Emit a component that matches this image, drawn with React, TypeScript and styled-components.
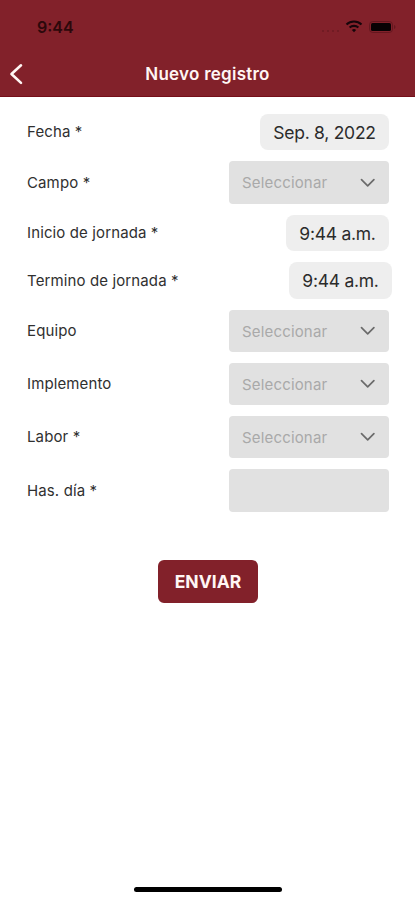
import React from "react";
import styled, { createGlobalStyle } from "styled-components";

const GlobalStyle = createGlobalStyle`
  * { box-sizing: border-box; }
  body { margin: 0; background: #fff; }
  button, input { font: inherit; letter-spacing: inherit; border: 0; padding: 0; margin: 0; outline: 0; }
`;

const Screen = styled.div`
  width: 415px;
  height: 900px;
  display: flex;
  flex-direction: column;
  align-items: center;
  background: #fff;
  color: #303030;
  font-family: Inter, "Liberation Sans", sans-serif;
  overflow: hidden;
`;

const Header = styled.header`
  width: 100%;
  height: 97px;
  flex: none;
  background: #82212a;
  border-bottom: 1px solid #750f19;
`;

const StatusBar = styled.div`
  height: 53px;
  padding: 1px 18px 0 37px;
  display: flex;
  align-items: center;
  justify-content: space-between;
`;

const Clock = styled.span`
  color: #2c080b;
  font-size: 16px;
  font-weight: 600;
`;

const TitleBar = styled.div`
  height: 42px;
  display: grid;
  grid-template-columns: 60px 1fr 60px;
  align-items: center;
`;

const BackButton = styled.button`
  display: flex;
  padding-left: 9px;
  background: none;
`;

const Title = styled.h1`
  margin: 0;
  color: #fff6f4;
  text-align: center;
  font-size: 17px;
  font-weight: 600;
  letter-spacing: 0.25px;
  white-space: nowrap;
`;

const Form = styled.form`
  width: 100%;
  padding: 17px 26px 0 27px;
  display: flex;
  flex-direction: column;
  gap: 11px;
`;

const Row = styled.div<{ $height: number; $shift?: number }>`
  height: ${(p) => p.$height}px;
  margin-right: ${(p) => -(p.$shift ?? 0)}px;
  display: flex;
  align-items: center;
  justify-content: space-between;
`;

const Label = styled.span`
  padding-bottom: 1px;
  font-size: 15px;
  letter-spacing: 0.12px;
  white-space: nowrap;
`;

const Pill = styled.button<{ $width: number }>`
  width: ${(p) => p.$width}px;
  height: 100%;
  border-radius: 8px;
  background: #eeeeee;
  color: #2b2b2b;
  font-size: 17.5px;
  letter-spacing: -0.26px;
  white-space: nowrap;
`;

const Select = styled.button`
  width: 160px;
  height: 100%;
  display: flex;
  align-items: center;
  justify-content: space-between;
  border-radius: 4px;
  background: #e1e1e1;
  color: #a9a9a9;
  font-size: 15px;
  letter-spacing: 0.17px;

  && {
    padding: 0 13px;
  }
`;

const TextField = styled.input`
  width: 160px;
  height: 100%;
  border-radius: 4px;
  background: #e1e1e1;
`;

const Submit = styled.button`
  width: 100px;
  height: 43px;
  align-self: center;
  border-radius: 6px;
  background: #82212a;
  color: #fff6f4;
  font-size: 17.5px;
  font-weight: 700;

  && {
    margin-top: 37px;
  }
`;

const HomeIndicator = styled.div`
  width: 148px;
  height: 5px;
  flex: none;
  margin: auto 0 8px;
  border-radius: 3px;
  background: #000;
`;

const StatusIcons = () => (
  <svg width="78" height="18" viewBox="0 0 78 18" fill="none">
    <g fill="#6b1a22">
      <circle cx="4" cy="13" r="1" />
      <circle cx="9" cy="13" r="1" />
      <circle cx="14" cy="13" r="1" />
      <circle cx="19" cy="13" r="1" />
    </g>
    <g stroke="#16050a" strokeWidth="2.1">
      <path d="M27.5 6.4a11 11 0 0 1 15 0" />
      <path d="M30.6 9.6a6.4 6.4 0 0 1 8.8 0" />
    </g>
    <path d="m35 14.3-2.1-2.2a3 3 0 0 1 4.2 0z" fill="#16050a" />
    <rect x="50.5" y="3.5" width="23" height="11" rx="3.3" stroke="#64171f" />
    <rect x="52" y="5" width="20" height="8" rx="1.6" fill="#080204" />
    <path d="M75 7v4c2-.7 2-3.3 0-4z" fill="#64171f" />
  </svg>
);

const BackIcon = () => (
  <svg width="15" height="22" viewBox="0 0 15 22" fill="none" stroke="#fff6f4" strokeWidth="2.6" strokeLinecap="round" strokeLinejoin="round">
    <path d="M12 2.3 2.5 11l9.5 8.9" />
  </svg>
);

const Chevron = () => (
  <svg width="16" height="10" viewBox="0 0 16 10" fill="none" stroke="#6b6b6b" strokeWidth="1.7" strokeLinecap="round" strokeLinejoin="round">
    <path d="m1.5 1.6 6.2 6.2 6.2-6.2" />
  </svg>
);

type Field = {
  label: string;
  kind: "pill" | "select" | "text";
  height: number;
  value?: string;
  width?: number;
  shift?: number;
};

const fields: Field[] = [
  { label: "Fecha *", kind: "pill", value: "Sep. 8, 2022", width: 129, height: 36 },
  { label: "Campo *", kind: "select", height: 43 },
  { label: "Inicio de jornada *", kind: "pill", value: "9:44 a.m.", width: 103, height: 36 },
  { label: "Termino de jornada *", kind: "pill", value: "9:44 a.m.", width: 103, height: 37, shift: 3 },
  { label: "Equipo", kind: "select", height: 42 },
  { label: "Implemento", kind: "select", height: 42 },
  { label: "Labor *", kind: "select", height: 42 },
  { label: "Has. día *", kind: "text", height: 43 },
];

const Control = ({ field }: { field: Field }) => {
  if (field.kind === "pill") {
    return <Pill type="button" $width={field.width ?? 103}>{field.value}</Pill>;
  }
  if (field.kind === "text") return <TextField aria-label={field.label} />;
  return (
    <Select type="button">
      Seleccionar
      <Chevron />
    </Select>
  );
};

export default function App() {
  return (
    <Screen>
      <GlobalStyle />
      <Header>
        <StatusBar>
          <Clock>9:44</Clock>
          <StatusIcons />
        </StatusBar>
        <TitleBar>
          <BackButton aria-label="Atrás">
            <BackIcon />
          </BackButton>
          <Title>Nuevo registro</Title>
        </TitleBar>
      </Header>
      <Form>
        {fields.map((field) => (
          <Row key={field.label} $height={field.height} $shift={field.shift}>
            <Label>{field.label}</Label>
            <Control field={field} />
          </Row>
        ))}
        <Submit type="button">ENVIAR</Submit>
      </Form>
      <HomeIndicator />
    </Screen>
  );
}
